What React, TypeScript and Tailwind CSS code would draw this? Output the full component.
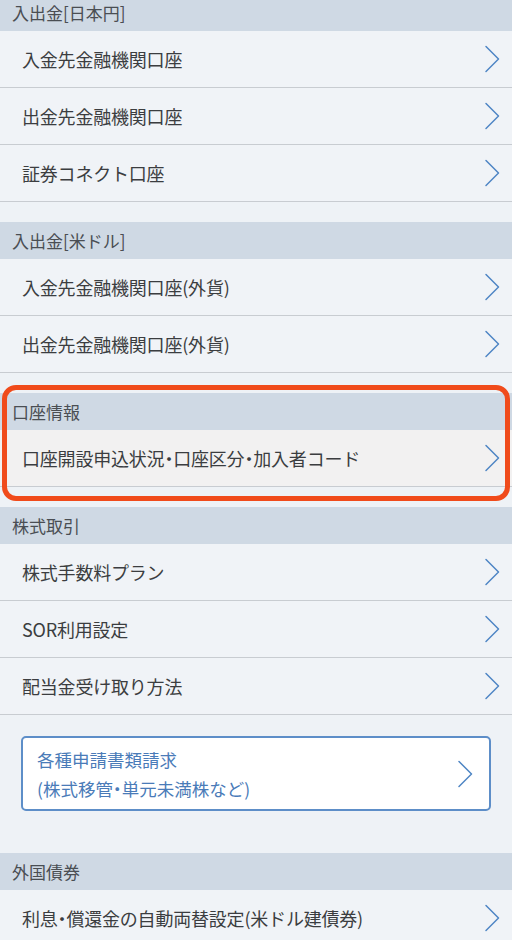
import React from 'react';

const FONT = { fontFamily: '"Noto Sans CJK JP", "Noto Sans", sans-serif' };

// narrow middle dot like the iOS rendering
const Label: React.FC<{ text: string }> = ({ text }) => {
  const parts = text.split('・');
  return (
    <>
      {parts.map((p, i) => (
        <React.Fragment key={i}>
          {i > 0 && <span className="[font-feature-settings:'halt']">・</span>}
          {p}
        </React.Fragment>
      ))}
    </>
  );
};

const Chevron: React.FC = () => (
  <svg width="16" height="28" viewBox="0 0 16 28" fill="none">
    <path d="M2 1.5 L14.5 14 L2 26.5" stroke="#4f86c4" strokeWidth="1.5" strokeLinecap="round" strokeLinejoin="round" />
  </svg>
);

const Header: React.FC<{ title: string }> = ({ title }) => (
  <div className="h-[37px] bg-[#cfd9e4] flex items-center px-3 text-[17px] text-[#4a4e53]">{title}</div>
);

const Row: React.FC<{ label: string; active?: boolean }> = ({ label, active }) => (
  <div
    className={`h-[57px] flex items-center justify-between pl-[22px] pr-[12px] border-b border-[#c8ccd1] ${
      active ? 'bg-[#f2f1f1]' : 'bg-[#f0f3f7]'
    }`}
  >
    <span className="text-[18px] text-[#3b3d40] tracking-[-0.2px]">
      <Label text={label} />
    </span>
    <Chevron />
  </div>
);

const Section: React.FC<{ title: string; rows: string[]; active?: boolean }> = ({ title, rows, active }) => (
  <div>
    <Header title={title} />
    {rows.map((r) => (
      <Row key={r} label={r} active={active} />
    ))}
  </div>
);

export default function App() {
  return (
    <div className="w-[512px] h-[940px] overflow-hidden bg-[#eef2f6]" style={FONT}>
      <div className="-mt-[6px] flex flex-col gap-5">
        <Section title="入出金[日本円]" rows={['入金先金融機関口座', '出金先金融機関口座', '証券コネクト口座']} />
        <Section title="入出金[米ドル]" rows={['入金先金融機関口座(外貨)', '出金先金融機関口座(外貨)']} />
        <div className="relative">
          <Section title="口座情報" rows={['口座開設申込状況・口座区分・加入者コード']} active />
          <div className="absolute left-[2px] right-[2px] -top-[8px] -bottom-[14px] border-[5px] border-[#f04b1b] rounded-[14px] pointer-events-none" />
        </div>
        <div>
          <Section title="株式取引" rows={['株式手数料プラン', 'SOR利用設定', '配当金受け取り方法']} />
          <div className="pt-[21px] pb-[42px] px-[21px]">
            <div className="h-[75px] bg-white border-2 border-[#5d8ec8] rounded-[5px] flex items-center justify-between pl-[14px] pr-[16px]">
              <div className="text-[17.5px] leading-[29px] text-[#4a7bb8]">
                <div>各種申請書類請求</div>
                <div>
                  <Label text="(株式移管・単元未満株など)" />
                </div>
              </div>
              <Chevron />
            </div>
          </div>
          <Section title="外国債券" rows={['利息・償還金の自動両替設定(米ドル建債券)']} />
        </div>
      </div>
    </div>
  );
}
